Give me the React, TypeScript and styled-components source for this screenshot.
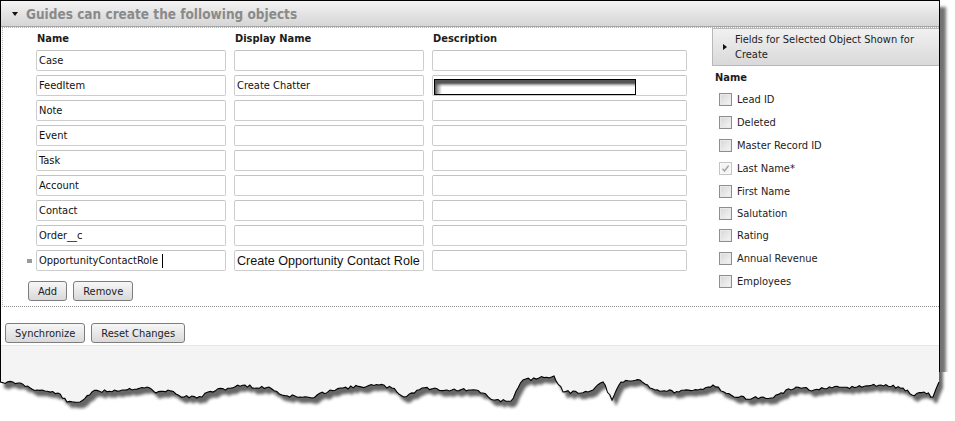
import styled, { createGlobalStyle } from "styled-components";

const uiFont = `"DejaVu Sans Condensed", "Liberation Sans", Arial, sans-serif`;

const GlobalStyle = createGlobalStyle`
  html, body {
    margin: 0;
    padding: 0;
    background: #fff;
  }
  body {
    font-family: ${uiFont};
  }
`;

const Page = styled.div`
  position: relative;
  width: 955px;
  height: 421px;
  overflow: hidden;
  background: #fff;
`;

const Frame = styled.div`
  width: 938px;
  height: 410px;
  border: 1px solid #000;
  border-bottom: none;
  background: #fff;
  box-shadow: 6px 7px 3px rgba(0, 0, 0, 0.55);
  display: flex;
  flex-direction: column;
`;

const SectionHeader = styled.div`
  box-sizing: border-box;
  height: 26px;
  display: flex;
  align-items: center;
  gap: 8px;
  padding-left: 11px;
  background: linear-gradient(#f3f3f3, #d5d5d5);
  border-bottom: 1px solid #a3a3a3;
`;

const DownArrow = styled.span`
  width: 0;
  height: 0;
  border-left: 3.5px solid transparent;
  border-right: 3.5px solid transparent;
  border-top: 4px solid #111;
`;

const RightArrow = styled.span`
  width: 0;
  height: 0;
  border-top: 3.5px solid transparent;
  border-bottom: 3.5px solid transparent;
  border-left: 4px solid #111;
`;

const SectionTitle = styled.span`
  font-family: ${uiFont};
  font-weight: bold;
  font-size: 13.5px;
  color: #8a8a8a;
`;

const SectionBody = styled.div`
  display: flex;
  margin-left: 1px;
  border-top: 1px dotted #b4b4b4;
  border-left: 1px dotted #b4b4b4;
  border-bottom: 1px dotted #8c8c8c;
`;

const ObjectsPane = styled.div`
  flex: 1;
  padding: 0 0 5px 25px;
`;

const ObjectGrid = styled.div`
  display: grid;
  grid-template-columns: 190px 190px 255px;
  grid-template-rows: 18px;
  grid-auto-rows: 21px;
  column-gap: 8px;
  row-gap: 4px;
  padding-left: 8px;
`;

const ColumnHeading = styled.div`
  box-sizing: border-box;
  height: 18px;
  padding: 4px 0 0 1px;
  line-height: 14px;
  font-family: ${uiFont};
  font-weight: bold;
  font-size: 11px;
  color: #1c1c1c;
`;

const Cell = styled.div<{ $marked?: boolean }>`
  position: relative;

  &::before {
    content: "";
    display: ${({ $marked }) => ($marked ? "block" : "none")};
    position: absolute;
    left: -9px;
    top: 9px;
    width: 5px;
    height: 4px;
    background: #9a9a9a;
  }
`;

const TextBox = styled.div<{ $wide?: boolean }>`
  box-sizing: border-box;
  height: 21px;
  display: flex;
  align-items: center;
  padding-left: 2px;
  border: 1px solid #cdcdcd;
  border-top-color: #c3c3c3;
  border-radius: 2px;
  background: #fff;
  font-family: ${({ $wide }) =>
    $wide ? `"Liberation Sans", Arial, sans-serif` : uiFont};
  font-size: ${({ $wide }) => ($wide ? "12.6px" : "11px")};
  color: #111;
  white-space: nowrap;
`;

const Caret = styled.span`
  display: inline-block;
  width: 1px;
  height: 14px;
  margin-left: 4px;
  background: #000;
`;

const Redaction = styled.span`
  position: absolute;
  left: 2px;
  top: 4px;
  width: 202px;
  height: 16px;
  box-sizing: border-box;
  border: 1px solid #000;
  background:
    linear-gradient(to right, rgba(85, 85, 85, 1) 0, rgba(85, 85, 85, 0.5) 3px, rgba(255, 255, 255, 0) 7px),
    linear-gradient(to bottom, #555 0, #555 3px, #c4c4c4 5px, #fff 7px);
`;

const ButtonRow = styled.div<{ $top: number }>`
  display: flex;
  gap: 6px;
  margin-top: ${({ $top }) => $top}px;
`;

const Button = styled.button`
  height: 20px;
  padding: 0 9px;
  border: 1px solid #7d7d7d;
  border-radius: 3px;
  background: linear-gradient(#f7f7f7, #d9d9d9);
  font-family: ${uiFont};
  font-size: 11px;
  color: #222;
  cursor: pointer;
`;

const FieldsPanel = styled.div`
  width: 227px;
`;

const PanelHeader = styled.div`
  box-sizing: border-box;
  height: 38px;
  display: flex;
  align-items: center;
  gap: 8px;
  padding-left: 10px;
  border: 1px solid #b8b8b8;
  border-right: none;
  background: linear-gradient(#f1f1f1, #d9d9d9);
`;

const PanelTitle = styled.span`
  font-family: ${uiFont};
  font-size: 11px;
  line-height: 15px;
  color: #222;
`;

const PanelHeading = styled.div`
  height: 22px;
  display: flex;
  align-items: center;
  padding-left: 3px;
  font-family: ${uiFont};
  font-weight: bold;
  font-size: 11px;
  color: #1c1c1c;
`;

const FieldRow = styled.label<{ $pitch: number }>`
  height: ${({ $pitch }) => $pitch}px;
  display: flex;
  align-items: center;
  gap: 5px;
  padding-left: 7px;
  font-family: ${uiFont};
  font-size: 11px;
  color: #222;
`;

const Box = styled.span<{ $checked?: boolean }>`
  box-sizing: border-box;
  width: 13px;
  height: 13px;
  display: flex;
  align-items: center;
  justify-content: center;
  border: 1px solid ${({ $checked }) => ($checked ? "#c4c4c4" : "#8e8e8e")};
  background: ${({ $checked }) =>
    $checked ? "#f4f4f4" : "linear-gradient(135deg, #d6d6d6, #f6f6f6)"};
  box-shadow: inset 0 0 0 1px ${({ $checked }) => ($checked ? "#fafafa" : "#e9e9e9")};
`;

const Footer = styled.div`
  height: 38px;
  padding: 16px 0 0 4px;
  box-sizing: border-box;
`;

const FooterFill = styled.div`
  flex: 1;
  border-top: 1px solid #e6e6e6;
  background: #f4f4f4;
`;

const TornEdge = styled.svg`
  position: absolute;
  left: 0;
  top: 360px;
  width: 955px;
  height: 61px;
`;

type ObjectRow = {
  name: string;
  display?: string;
  redacted?: boolean;
  editing?: boolean;
};

const objects: ObjectRow[] = [
  { name: "Case" },
  { name: "FeedItem", display: "Create Chatter", redacted: true },
  { name: "Note" },
  { name: "Event" },
  { name: "Task" },
  { name: "Account" },
  { name: "Contact" },
  { name: "Order__c" },
  {
    name: "OpportunityContactRole",
    display: "Create Opportunity Contact Role",
    editing: true,
  },
];

const fields: { label: string; pitch: number; checked?: boolean }[] = [
  { label: "Lead ID", pitch: 23 },
  { label: "Deleted", pitch: 23 },
  { label: "Master Record ID", pitch: 23 },
  { label: "Last Name*", pitch: 23, checked: true },
  { label: "First Name", pitch: 23 },
  { label: "Salutation", pitch: 21 },
  { label: "Rating", pitch: 23 },
  { label: "Annual Revenue", pitch: 23 },
  { label: "Employees", pitch: 23 },
];

const tearKeys: [number, number][] = [
  [0, 382], [18, 383], [37, 390], [58, 393], [67, 402], [80, 402], [92, 392],
  [122, 390], [147, 387], [156, 393], [168, 390], [184, 397], [202, 397],
  [208, 392], [245, 385], [257, 388], [269, 387], [282, 395], [300, 397],
  [312, 398], [330, 390], [343, 388], [379, 385], [392, 388], [404, 397],
  [422, 388], [447, 390], [471, 390], [483, 393], [493, 400], [511, 401],
  [523, 380], [539, 378], [554, 376], [563, 392], [588, 392], [603, 382],
  [612, 400], [621, 382], [640, 380], [655, 390], [679, 392], [698, 390],
  [713, 385], [734, 397], [753, 398], [771, 398], [796, 387], [814, 390],
  [832, 388], [857, 387], [881, 385], [903, 388], [912, 395], [924, 392],
  [933, 397], [939, 382],
];

function buildTear() {
  let seed = 11;
  const rand = () => {
    seed = (seed * 9301 + 49297) % 233280;
    return seed / 233280;
  };
  const pts: string[] = [];
  for (let i = 0; i < tearKeys.length - 1; i++) {
    const [x0, y0] = tearKeys[i];
    const [x1, y1] = tearKeys[i + 1];
    const steps = Math.max(1, Math.round((x1 - x0) / 2.5));
    for (let s = 0; s < steps; s++) {
      const t = s / steps;
      const jitter = s === 0 ? 0 : (rand() - 0.5) * 3;
      pts.push(`${(x0 + (x1 - x0) * t).toFixed(1)},${(y0 + (y1 - y0) * t + jitter).toFixed(1)}`);
    }
  }
  const last = tearKeys[tearKeys.length - 1];
  pts.push(`${last[0]},${last[1]}`);
  return pts;
}

const tear = buildTear();
const tearLine = `M${tear.join(" L")}`;
const belowTear = `${tearLine} L939,372 L955,372 L955,421 L0,421 Z`;
const paperShape = `M0,340 L939,340 L${[...tear].reverse().join(" L")} Z`;

export default function App() {
  return (
    <Page>
      <GlobalStyle />
      <Frame>
        <SectionHeader>
          <DownArrow />
          <SectionTitle>Guides can create the following objects</SectionTitle>
        </SectionHeader>
        <SectionBody>
          <ObjectsPane>
            <ObjectGrid>
              <ColumnHeading>Name</ColumnHeading>
              <ColumnHeading>Display Name</ColumnHeading>
              <ColumnHeading>Description</ColumnHeading>
              {objects.map((row) => [
                <Cell key={`${row.name}-n`} $marked={row.editing}>
                  <TextBox>
                    {row.name}
                    {row.editing && <Caret />}
                  </TextBox>
                </Cell>,
                <Cell key={`${row.name}-d`}>
                  <TextBox $wide={row.editing}>{row.display}</TextBox>
                </Cell>,
                <Cell key={`${row.name}-x`}>
                  <TextBox />
                  {row.redacted && <Redaction />}
                </Cell>,
              ])}
            </ObjectGrid>
            <ButtonRow $top={10}>
              <Button>Add</Button>
              <Button>Remove</Button>
            </ButtonRow>
          </ObjectsPane>
          <FieldsPanel>
            <PanelHeader>
              <RightArrow />
              <PanelTitle>
                Fields for Selected Object Shown for
                <br />
                Create
              </PanelTitle>
            </PanelHeader>
            <PanelHeading>Name</PanelHeading>
            {fields.map((f) => (
              <FieldRow key={f.label} $pitch={f.pitch}>
                <Box $checked={f.checked}>
                  {f.checked && (
                    <svg width="9" height="9" viewBox="0 0 9 9">
                      <path d="M1.5 4.8 L3.6 7 L7.6 1.6" fill="none" stroke="#9c9c9c" strokeWidth="1.3" />
                    </svg>
                  )}
                </Box>
                {f.label}
              </FieldRow>
            ))}
          </FieldsPanel>
        </SectionBody>
        <Footer>
          <ButtonRow $top={0}>
            <Button>Synchronize</Button>
            <Button>Reset Changes</Button>
          </ButtonRow>
        </Footer>
        <FooterFill />
      </Frame>
      <TornEdge viewBox="0 360 955 61">
        <defs>
          <clipPath id="below-tear">
            <path d={belowTear} />
          </clipPath>
          <filter id="tear-blur" x="-5%" y="-50%" width="110%" height="200%">
            <feGaussianBlur stdDeviation="1.6" />
          </filter>
        </defs>
        <path d={belowTear} fill="#fff" />
        <g clipPath="url(#below-tear)">
          <path d={paperShape} transform="translate(4 6)" fill="rgba(0,0,0,0.6)" filter="url(#tear-blur)" />
        </g>
        <path d={tearLine} fill="none" stroke="#000" strokeWidth="1.1" />
      </TornEdge>
    </Page>
  );
}
